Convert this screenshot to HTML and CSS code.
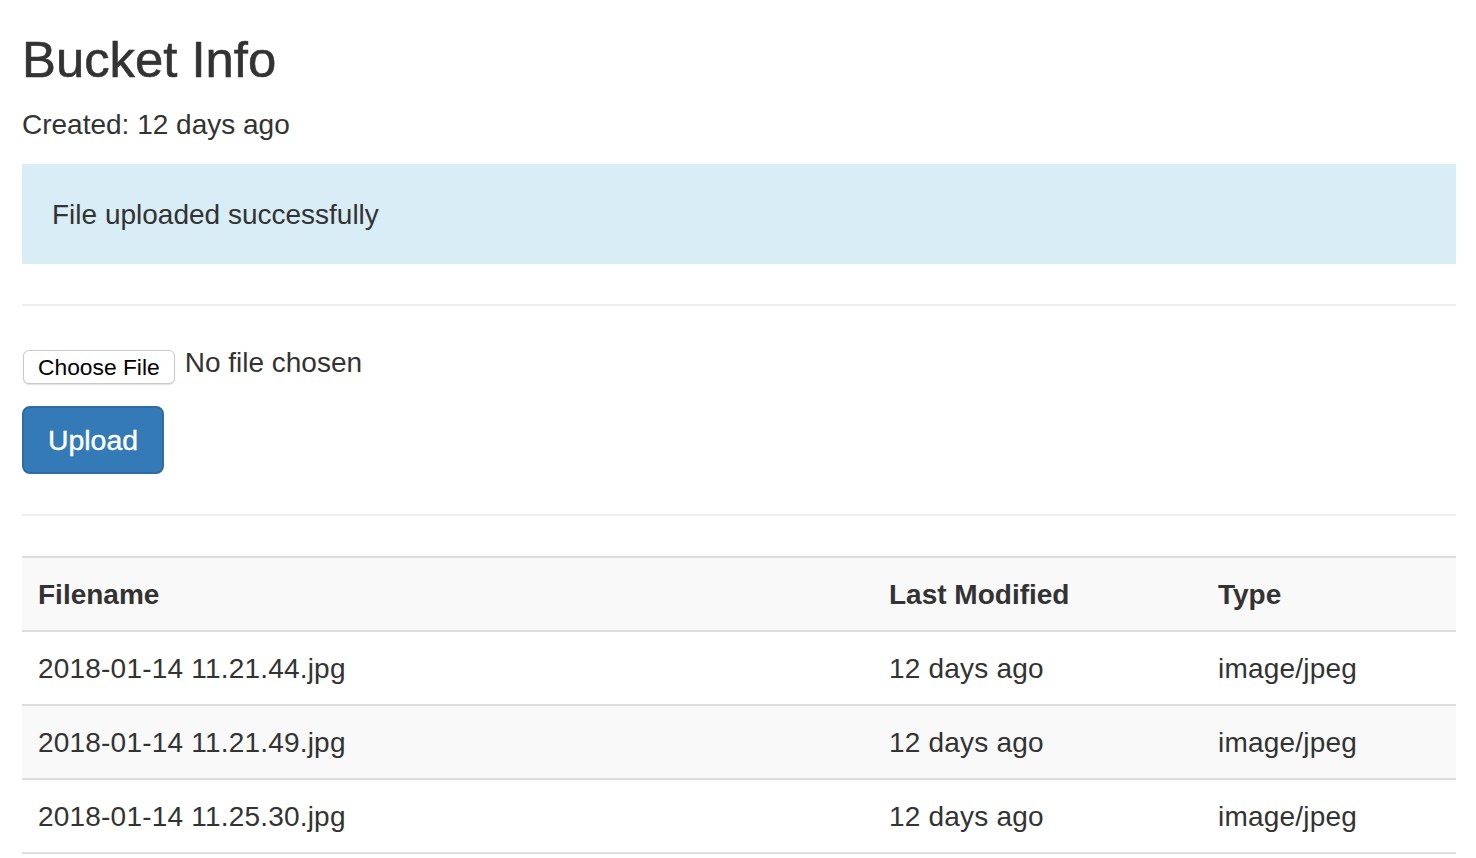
FILE: index.html
```html
<!DOCTYPE html>
<html lang="en">
<head>
<meta charset="utf-8">
<title>Bucket Info</title>
<link rel="stylesheet" href="styles.css">
</head>
<body>
<div class="container">
  <h1 class="title">Bucket Info</h1>
  <p class="created">Created: 12 days ago</p>
  <div class="alert">File uploaded successfully</div>
  <hr class="rule">
  <form class="upload-form">
    <div class="file-row">
      <button type="button" class="file-btn">Choose File</button>
      <span class="file-status">No file chosen</span>
    </div>
    <button type="button" class="btn-primary">Upload</button>
  </form>
  <hr class="rule">
  <table class="files">
    <colgroup>
      <col class="c-name">
      <col class="c-mod">
      <col class="c-type">
    </colgroup>
    <tbody>
      <tr class="head">
        <th>Filename</th>
        <th>Last Modified</th>
        <th>Type</th>
      </tr>
      <tr>
        <td>2018-01-14 11.21.44.jpg</td>
        <td>12 days ago</td>
        <td>image/jpeg</td>
      </tr>
      <tr class="alt">
        <td>2018-01-14 11.21.49.jpg</td>
        <td>12 days ago</td>
        <td>image/jpeg</td>
      </tr>
      <tr>
        <td>2018-01-14 11.25.30.jpg</td>
        <td>12 days ago</td>
        <td>image/jpeg</td>
      </tr>
    </tbody>
  </table>
</div>
</body>
</html>
```

FILE: styles.css
```css
* { box-sizing: border-box; }

html, body {
  margin: 0;
  padding: 0;
  background: #fff;
}

body {
  font-family: "Liberation Sans", Arial, Helvetica, sans-serif;
  font-size: 28px;
  line-height: 40px;
  color: #333;
}

.container {
  padding: 0 20px 0 22px;
}

.title {
  font-size: 50.8px;
  line-height: 55px;
  font-weight: 500;
  -webkit-text-stroke: 0.6px #333;
  margin: 32px 0 17px;
  color: #333;
}

.created {
  margin: 0 0 20px;
  padding-top: 1px;
  height: 40px;
}

.alert {
  background: #d9edf7;
  color: #333;
  padding: 31px 30px 29px;
  height: 100px;
  margin: 0 0 40px;
}

.rule {
  border: 0;
  border-top: 2px solid #eee;
  margin: 0;
  height: 0;
}

.upload-form {
  padding: 36px 0 40px;
}

.file-row {
  display: flex;
  align-items: flex-start;
  gap: 10px;
  height: 42px;
  margin-bottom: 22px;
}

.file-btn {
  margin-top: 8px;
  height: 34px;
  padding: 0 14px;
  margin-left: 1px;
  font-family: "Liberation Sans", Arial, sans-serif;
  font-size: 22.8px;
  color: #000;
  background: #fff;
  border: 1px solid #c9c9c9;
  border-radius: 6px;
  box-shadow: 0 1px 1px rgba(0, 0, 0, 0.12);
  line-height: 30px;
}

.file-status {
  line-height: 40px;
  padding-top: 1px;
}

.btn-primary {
  display: block;
  width: 142px;
  height: 68px;
  padding: 0;
  text-align: center;
  font-family: "Liberation Sans", Arial, sans-serif;
  font-size: 28.4px;
  line-height: 40px;
  color: #fff;
  -webkit-text-stroke: 0.4px #fff;
  background: #337ab7;
  border: 2px solid #2e6da4;
  border-radius: 8px;
  margin: 0;
}

.files {
  width: 100%;
  border-collapse: collapse;
  border-spacing: 0;
  margin-top: 40px;
}

.c-name { width: 851px; }
.c-mod { width: 329px; }
.c-type { width: 254px; }

.files th,
.files td {
  text-align: left;
  padding: 17px 16px 15px;
  line-height: 40px;
  border-top: 2px solid #ddd;
  vertical-align: top;
}

.files td {
  letter-spacing: 0.2px;
}

.files th {
  font-weight: bold;
}

.files tr:last-child td {
  border-bottom: 2px solid #ddd;
}

.files .head,
.files .alt {
  background: #f9f9f9;
}
```
